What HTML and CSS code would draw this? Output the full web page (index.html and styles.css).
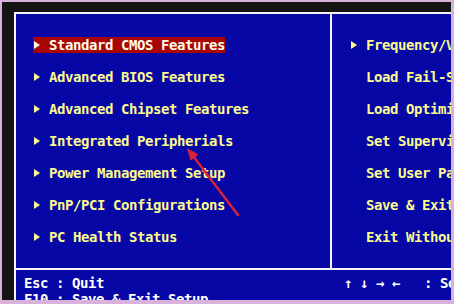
FILE: index.html
```html
<!DOCTYPE html>
<html>
<head>
<meta charset="utf-8">
<link rel="stylesheet" href="styles.css">
</head>
<body>
<div class="screen">
  <div class="panels">
    <ul class="menu menu-left">
      <li class="item selected"><span class="tri"></span><span class="label">Standard CMOS Features</span></li>
      <li class="item"><span class="tri"></span><span class="label">Advanced BIOS Features</span></li>
      <li class="item"><span class="tri"></span><span class="label">Advanced Chipset Features</span></li>
      <li class="item"><span class="tri"></span><span class="label">Integrated Peripherials</span></li>
      <li class="item"><span class="tri"></span><span class="label">Power Management Setup</span></li>
      <li class="item"><span class="tri"></span><span class="label">PnP/PCI Configurations</span></li>
      <li class="item"><span class="tri"></span><span class="label">PC Health Status</span></li>
    </ul>
    <ul class="menu menu-right">
      <li class="item"><span class="tri"></span><span class="label">Frequency/Voltage Control</span></li>
      <li class="item"><span class="gap"></span><span class="label">Load Fail-Safe Defaults</span></li>
      <li class="item"><span class="gap"></span><span class="label">Load Optimized Defaults</span></li>
      <li class="item"><span class="gap"></span><span class="label">Set Supervisor Password</span></li>
      <li class="item"><span class="gap"></span><span class="label">Set User Password</span></li>
      <li class="item"><span class="gap"></span><span class="label">Save &amp; Exit Setup</span></li>
      <li class="item"><span class="gap"></span><span class="label">Exit Without Saving</span></li>
    </ul>
  </div>
  <div class="footer">
    <div class="fcol fcol-left">
      <div class="fline">Esc : Quit</div>
      <div class="fline">F10 : Save &amp; Exit Setup</div>
    </div>
    <div class="fcol fcol-right">
      <div class="fline">↑ ↓ → ←   : Select Item</div>
    </div>
  </div>
</div>
<svg class="annot" width="454" height="304" viewBox="0 0 454 304">
  <line x1="238" y1="215" x2="193" y2="156" stroke="#d81f3c" stroke-width="2.5" stroke-linecap="round"/>
  <polygon points="187,148 198.5,154.5 190.5,160.8" fill="#d81f3c"/>
</svg>
</body>
</html>
```
FILE: styles.css
```css
html {
  margin: 0;
  padding: 0;
  background: #d8b2da;
}
body {
  margin: 0;
  width: 454px;
  height: 304px;
  box-sizing: border-box;
  border-style: solid;
  border-color: #d8b2da;
  border-width: 2px 3px 4px 2px;
  padding: 10px 0 0 12px;
  background: #141414;
  overflow: hidden;
  position: relative;
  display: flex;
  font-family: "DejaVu Sans Mono", "Liberation Mono", monospace;
  font-weight: bold;
  font-size: 14px;
  letter-spacing: -0.43px;
}
.screen {
  flex: 1;
  min-width: 0;
  border-top: 2px solid #f4f4f4;
  border-left: 2px solid #f4f4f4;
  background: #0707a6;
  display: flex;
  flex-direction: column;
  overflow: hidden;
}
.panels {
  display: flex;
  height: 254px;
  flex: none;
  border-bottom: 2px solid #f4f4f4;
}
.menu {
  list-style: none;
  margin: 0;
  box-sizing: border-box;
  display: flex;
  flex-direction: column;
  align-items: flex-start;
  gap: 16px;
  white-space: nowrap;
}
.menu-left {
  width: 316px;
  flex: none;
  border-right: 2px solid #f4f4f4;
  padding: 23px 0 0 17px;
}
.menu-right {
  flex: 1;
  min-width: 0;
  padding: 23px 0 0 18px;
  overflow: hidden;
}
.item {
  height: 16px;
  line-height: 16px;
  display: flex;
  align-items: center;
  color: #fafa8e;
}
.item.selected {
  background: #a80404;
  color: #fffbe8;
}
.tri {
  width: 0;
  height: 0;
  flex: none;
  border-left: 6px solid #fafa8e;
  border-top: 4px solid transparent;
  border-bottom: 4px solid transparent;
  margin-left: 1px;
  margin-right: 9px;
}
.selected .tri {
  border-left-color: #fffbe8;
}
.gap {
  width: 16px;
  flex: none;
}
.footer {
  display: flex;
  padding: 5px 0 0 8px;
  color: #ffffff;
  overflow: hidden;
}
.fcol-left {
  width: 320px;
  flex: none;
}
.fcol-right {
  min-width: 0;
}
.fline {
  height: 16px;
  line-height: 16px;
  white-space: pre;
}
.annot {
  position: absolute;
  top: -2px;
  left: -2px;
}
```
